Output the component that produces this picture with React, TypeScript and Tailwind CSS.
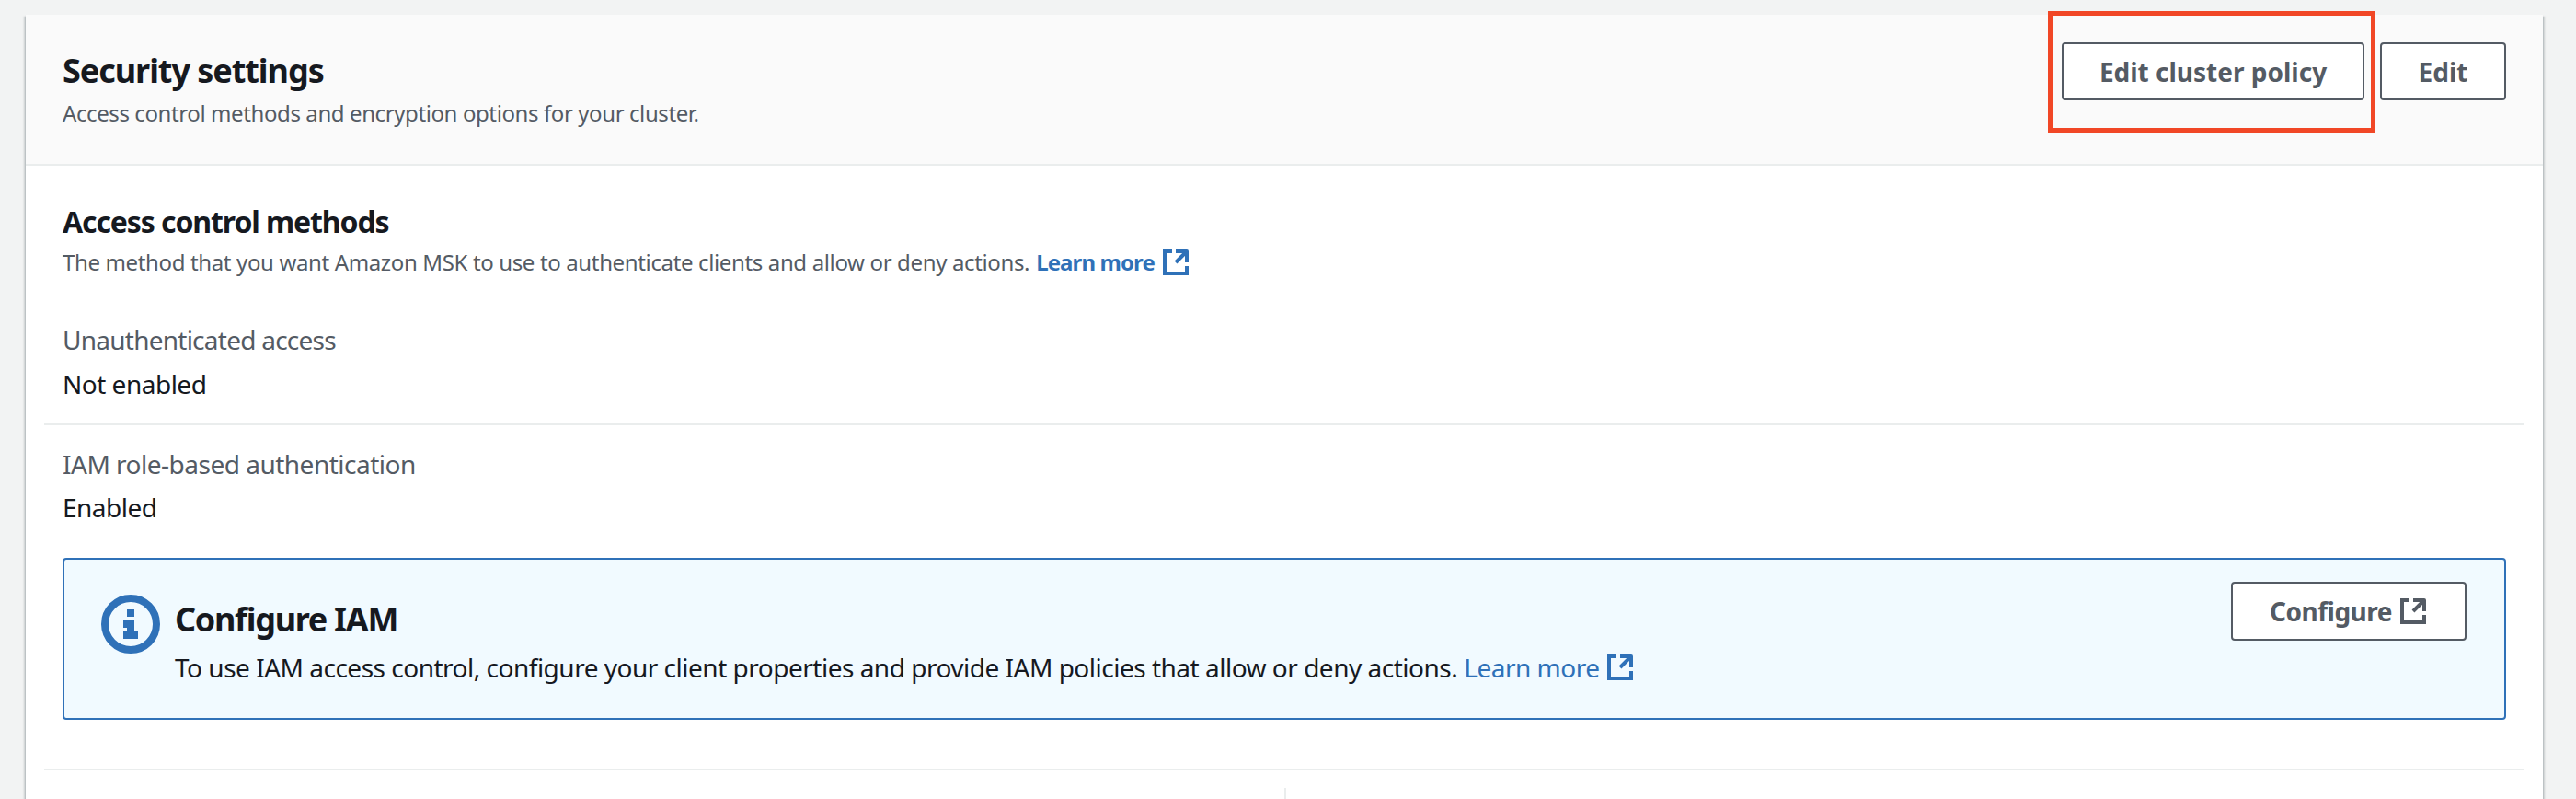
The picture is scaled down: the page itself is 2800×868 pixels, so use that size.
import React from "react";

function External({ className }: { className: string }) {
  return (
    <svg viewBox="0 0 16 16" fill="none" stroke="currentColor" strokeWidth={2} className={className}>
      <path d="M14 8.01v-6H8M14.02 2 8 8" strokeLinejoin="round" />
      <path d="M6 2.01H2v12h12v-3.99" />
    </svg>
  );
}

function InfoIcon() {
  return (
    <svg viewBox="0 0 64 64" className="w-[64px] h-[64px] shrink-0 mt-[38px] text-[#2f71b8]">
      <circle cx="32" cy="32" r="28" fill="none" stroke="currentColor" strokeWidth="8" />
      <path d="M28 16h8v8h-8zM24 28h12v12h4v8H24v-8h4v-4h-4z" fill="currentColor" />
    </svg>
  );
}

function Button({ children, className = "" }: { children: React.ReactNode; className?: string }) {
  return (
    <button className={`flex items-center justify-center h-[63px] bg-white border-2 border-[#545b64] rounded-[4px] text-[#545b64] font-bold text-[28px] leading-[40px] ${className}`}>
      {children}
    </button>
  );
}

export default function App() {
  return (
    <div className="w-[2800px] h-[868px] overflow-hidden bg-[#f2f3f3] pt-[16px] pl-[28px] pr-[36px] font-['Noto_Sans',sans-serif] text-[#16191f]">
      <div className="bg-white h-[900px] shadow-[0_2px_2px_0_rgba(0,28,36,0.3),2px_2px_2px_0_rgba(0,28,36,0.15),-2px_2px_2px_0_rgba(0,28,36,0.15)]">
        <header className="flex justify-between bg-[#fafafa] border-b-2 border-[#eaeded] h-[164px] px-[40px]">
          <div className="pt-[39px]">
            <h2 className="text-[36px] leading-[44px] font-bold tracking-[-1.05px]">Security settings</h2>
            <p className="mt-[8px] text-[24px] leading-[32px] text-[#545b64] tracking-[-0.4px]">Access control methods and encryption options for your cluster.</p>
          </div>
          <div className="flex gap-[17px] pt-[30px] items-start">
            <div className="relative">
              <Button className="w-[329px]">Edit cluster policy</Button>
              <div className="absolute top-[-34px] bottom-[-35px] left-[-15px] right-[-12px] border-[5px] border-[#f14726]" />
            </div>
            <Button className="w-[137px]">Edit</Button>
          </div>
        </header>
        <section className="pt-[41px] px-[20px]">
          <div className="px-[20px]">
            <h3 className="text-[32px] leading-[40px] font-bold tracking-[-1.1px]">Access control methods</h3>
            <p className="mt-[8px] text-[24px] leading-[32px] text-[#545b64] flex items-center tracking-[-0.36px]">
              The method that you want Amazon MSK to use to authenticate clients and allow or deny actions.
              <a className="ml-[7px] font-bold text-[#2f71b8] flex items-center tracking-[-0.9px]">
                Learn more
                <External className="w-[32px] h-[32px] ml-[7px]" />
              </a>
            </p>
          </div>
          <div className="mt-[48px] px-[20px] pb-[23px] border-b-2 border-[#eaeded]">
            <div className="text-[28px] leading-[40px] text-[#545b64] tracking-[-0.75px]">Unauthenticated access</div>
            <div className="mt-[8px] text-[28px] leading-[40px] tracking-[-0.5px]">Not enabled</div>
          </div>
          <div className="mt-[22px] px-[20px]">
            <div className="text-[28px] leading-[40px] text-[#545b64] tracking-[-0.5px]">IAM role-based authentication</div>
            <div className="mt-[7px] text-[28px] leading-[40px] tracking-[-0.5px]">Enabled</div>
            <div className="mt-[35px] h-[176px] flex justify-between bg-[#f1faff] border-2 border-[#2f71b8] rounded-[4px] pl-[40px] pr-[41px]">
              <div className="flex gap-[16px]">
                <InfoIcon />
                <div className="pt-[43px]">
                  <div className="text-[36px] leading-[44px] font-bold tracking-[-1.3px]">Configure IAM</div>
                  <div className="mt-[10px] text-[28px] leading-[40px] flex items-center tracking-[-0.495px]">
                    To use IAM access control, configure your client properties and provide IAM policies that allow or deny actions.
                    <a className="ml-[7px] text-[#2f71b8] flex items-center">
                      Learn more
                      <External className="w-[32px] h-[32px] ml-[6px]" />
                    </a>
                  </div>
                </div>
              </div>
              <div className="pt-[24px]">
                <Button className="w-[256px] h-[64px] gap-[7px] tracking-[-0.5px]">
                  Configure
                  <External className="w-[32px] h-[32px]" />
                </Button>
              </div>
            </div>
          </div>
          <div className="mt-[53px] border-t-2 border-[#eaeded] pt-[19px] grid grid-cols-2">
            <div />
            <div className="border-l-2 border-[#eaeded] h-[40px]" />
          </div>
        </section>
      </div>
    </div>
  );
}
